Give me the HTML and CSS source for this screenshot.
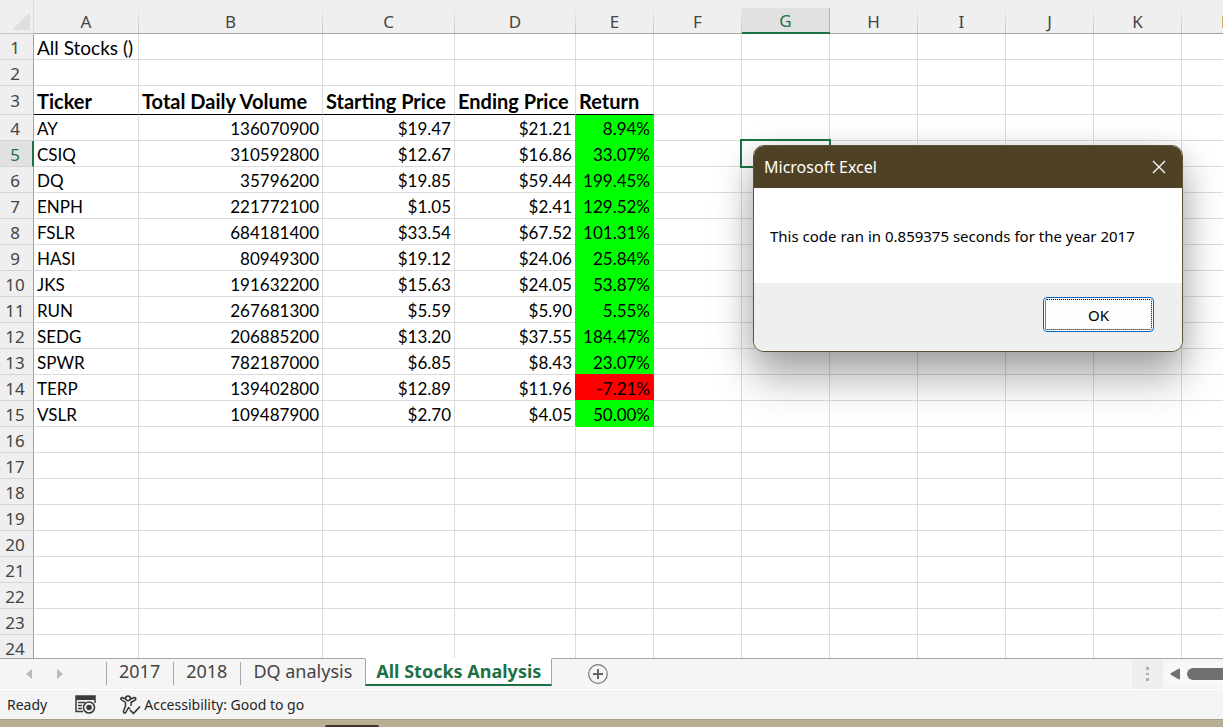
FILE: index.html
```html
<!DOCTYPE html>
<html lang="en">
<head>
<meta charset="utf-8">
<title>All Stocks Analysis</title>
<link rel="stylesheet" href="styles.css">
</head>
<body>
<main class="workspace">
<table class="sheet">
<colgroup><col class="w-rows"><col class="w-a"><col class="w-b"><col class="w-c"><col class="w-d"><col class="w-e"><col class="w-std"><col class="w-std"><col class="w-std"><col class="w-std"><col class="w-std"><col class="w-std"><col></colgroup>
<thead>
<tr><td class="corner"><svg width="18" height="18" viewBox="0 0 18 18" aria-hidden="true"><path d="M18 0V18H0z" fill="#dfdfdf"/></svg></td><th>A</th><th>B</th><th>C</th><th>D</th><th>E</th><th>F</th><th class="active">G</th><th>H</th><th>I</th><th>J</th><th>K</th><th>L</th></tr>
</thead>
<tbody>
<tr><th>1</th><td class="text caption">All Stocks ()</td><td></td><td></td><td></td><td></td><td></td><td></td><td></td><td></td><td></td><td></td><td></td></tr>
<tr><th>2</th><td></td><td></td><td></td><td></td><td></td><td></td><td></td><td></td><td></td><td></td><td></td><td></td></tr>
<tr class="titles"><th>3</th><td class="head">Ticker</td><td class="head">Total Daily Volume</td><td class="head">Starting Price</td><td class="head">Ending Price</td><td class="head">Return</td><td></td><td></td><td></td><td></td><td></td><td></td><td></td></tr>
<tr><th>4</th><td class="text">AY</td><td>136070900</td><td>$19.47</td><td>$21.21</td><td class="gain first">8.94%</td><td></td><td></td><td></td><td></td><td></td><td></td><td></td></tr>
<tr><th class="active">5</th><td class="text">CSIQ</td><td>310592800</td><td>$12.67</td><td>$16.86</td><td class="gain">33.07%</td><td></td><td class="selected"></td><td></td><td></td><td></td><td></td><td></td></tr>
<tr><th>6</th><td class="text">DQ</td><td>35796200</td><td>$19.85</td><td>$59.44</td><td class="gain">199.45%</td><td></td><td></td><td></td><td></td><td></td><td></td><td></td></tr>
<tr><th>7</th><td class="text">ENPH</td><td>221772100</td><td>$1.05</td><td>$2.41</td><td class="gain">129.52%</td><td></td><td></td><td></td><td></td><td></td><td></td><td></td></tr>
<tr><th>8</th><td class="text">FSLR</td><td>684181400</td><td>$33.54</td><td>$67.52</td><td class="gain">101.31%</td><td></td><td></td><td></td><td></td><td></td><td></td><td></td></tr>
<tr><th>9</th><td class="text">HASI</td><td>80949300</td><td>$19.12</td><td>$24.06</td><td class="gain">25.84%</td><td></td><td></td><td></td><td></td><td></td><td></td><td></td></tr>
<tr><th>10</th><td class="text">JKS</td><td>191632200</td><td>$15.63</td><td>$24.05</td><td class="gain">53.87%</td><td></td><td></td><td></td><td></td><td></td><td></td><td></td></tr>
<tr><th>11</th><td class="text">RUN</td><td>267681300</td><td>$5.59</td><td>$5.90</td><td class="gain">5.55%</td><td></td><td></td><td></td><td></td><td></td><td></td><td></td></tr>
<tr><th>12</th><td class="text">SEDG</td><td>206885200</td><td>$13.20</td><td>$37.55</td><td class="gain">184.47%</td><td></td><td></td><td></td><td></td><td></td><td></td><td></td></tr>
<tr><th>13</th><td class="text">SPWR</td><td>782187000</td><td>$6.85</td><td>$8.43</td><td class="gain">23.07%</td><td></td><td></td><td></td><td></td><td></td><td></td><td></td></tr>
<tr><th>14</th><td class="text">TERP</td><td>139402800</td><td>$12.89</td><td>$11.96</td><td class="loss">-7.21%</td><td></td><td></td><td></td><td></td><td></td><td></td><td></td></tr>
<tr><th>15</th><td class="text">VSLR</td><td>109487900</td><td>$2.70</td><td>$4.05</td><td class="gain">50.00%</td><td></td><td></td><td></td><td></td><td></td><td></td><td></td></tr>
<tr><th>16</th><td></td><td></td><td></td><td></td><td></td><td></td><td></td><td></td><td></td><td></td><td></td><td></td></tr>
<tr><th>17</th><td></td><td></td><td></td><td></td><td></td><td></td><td></td><td></td><td></td><td></td><td></td><td></td></tr>
<tr><th>18</th><td></td><td></td><td></td><td></td><td></td><td></td><td></td><td></td><td></td><td></td><td></td><td></td></tr>
<tr><th>19</th><td></td><td></td><td></td><td></td><td></td><td></td><td></td><td></td><td></td><td></td><td></td><td></td></tr>
<tr><th>20</th><td></td><td></td><td></td><td></td><td></td><td></td><td></td><td></td><td></td><td></td><td></td><td></td></tr>
<tr><th>21</th><td></td><td></td><td></td><td></td><td></td><td></td><td></td><td></td><td></td><td></td><td></td><td></td></tr>
<tr><th>22</th><td></td><td></td><td></td><td></td><td></td><td></td><td></td><td></td><td></td><td></td><td></td><td></td></tr>
<tr><th>23</th><td></td><td></td><td></td><td></td><td></td><td></td><td></td><td></td><td></td><td></td><td></td><td></td></tr>
<tr><th>24</th><td></td><td></td><td></td><td></td><td></td><td></td><td></td><td></td><td></td><td></td><td></td><td></td></tr>
</tbody>
</table>
<section class="dialog" role="dialog" aria-labelledby="dialog-title">
<header class="dialog-bar">
<h1 class="dialog-title" id="dialog-title">Microsoft Excel</h1>
<button class="dialog-close" aria-label="Close"><svg width="14" height="14" viewBox="0 0 14 14" aria-hidden="true"><path d="M1 1l12 12M13 1L1 13" stroke="#fff" stroke-width="1.3" fill="none"/></svg></button>
</header>
<p class="dialog-message">This code ran in 0.859375 seconds for the year 2017</p>
<footer class="dialog-actions"><button class="ok">OK</button></footer>
</section>
</main>
<nav class="tabs" aria-label="Sheets">
<div class="tab-scroll">
<button class="arrow" aria-label="Previous sheets"><svg width="6" height="10" viewBox="0 0 6 10" aria-hidden="true"><path d="M6 0v10L0 5z" fill="#b9b9b9"/></svg></button>
<button class="arrow" aria-label="Next sheets"><svg width="6" height="10" viewBox="0 0 6 10" aria-hidden="true"><path d="M0 0v10l6-5z" fill="#b9b9b9"/></svg></button>
</div>
<button class="tab">2017</button>
<button class="tab">2018</button>
<button class="tab">DQ analysis</button>
<button class="tab current">All Stocks Analysis</button>
<div class="tab-rest">
<button class="add" aria-label="New sheet"><svg width="20" height="20" viewBox="0 0 20 20" fill="none" aria-hidden="true"><circle cx="10" cy="10" r="9.3" stroke="#777" stroke-width="1.2"/><path d="M10 5v10M5 10h10" stroke="#666" stroke-width="2"/></svg></button>
<div class="grip"><svg width="3" height="15" viewBox="0 0 3 15" fill="#b0b0b0" aria-hidden="true"><path d="M0 0h3v3H0zM0 6h3v2H0zM0 11h3v3H0z"/></svg></div>
<div class="scroller">
<button class="arrow" aria-label="Scroll left"><svg width="10" height="12" viewBox="0 0 10 12" aria-hidden="true"><path d="M9 .5q1 0 1 1v9q0 1-1 1L.8 6.8Q0 6 .8 5.200z" fill="#707070"/></svg></button>
<div class="thumb"></div>
</div>
</div>
</nav>
<footer class="status">
<span class="ready">Ready</span>
<svg class="macro" width="21" height="19" viewBox="0 0 21 19" fill="none" stroke="#3b3b3b" aria-hidden="true"><path d="M8 16.500H1V1h19v7" stroke-width="1.500"/><path d="M1 3h19" stroke-width="4"/><path d="M3 7.500h7M3 10.500h4M3 13.500h4" stroke-width="1.300"/><circle cx="14" cy="12.500" r="5.500" stroke-width="1.600"/><circle cx="14" cy="12.500" r="2.800" fill="#3b3b3b" stroke="none"/></svg>
<span class="access"><svg width="21" height="20" viewBox="0 0 21 20" fill="none" stroke="#333" stroke-width="1.500" stroke-linejoin="round" aria-hidden="true"><circle cx="8" cy="3.300" r="2.400"/><path d="M5.600 4.200L2.500 2.500Q.5 2.500 1 4.500L5.500 7.500V11L3.500 16Q3.200 18.500 5.500 18L8.500 12.500 10 14M10.400 4.200L14 2.500Q16.500 2.500 15.500 4.800L11 7.500V11"/><path d="M10 15l3.500 3.500L20 11.500" stroke-width="1.700"/></svg>Accessibility: Good to go</span>
</footer>
<div class="taskbar"><div class="taskbar-item"></div></div>
</body>
</html>
```
FILE: styles.css
```css
* {
  box-sizing: border-box;
}

body {
  margin: 0;
  height: 100vh;
  display: flex;
  flex-direction: column;
  overflow: hidden;
  background: #fff;
  color: #000;
  font-family: "Noto Sans", "Open Sans", sans-serif;
}

button {
  margin: 0;
  padding: 0;
  border: 0;
  background: none;
  color: inherit;
  font: inherit;
}

svg {
  display: block;
  flex: none;
}

.workspace {
  position: relative;
  flex: 1;
  min-height: 0;
  overflow: hidden;
}

/* Grid */

.sheet {
  width: 100%;
  min-width: 1270px;
  table-layout: fixed;
  border-collapse: separate;
  border-spacing: 0;
  font-family: Lato, "Open Sans", sans-serif;
  font-size: 17px;
  line-height: 20px;
}

.w-rows { width: 34px; }
.w-a { width: 105px; }
.w-b { width: 184px; }
.w-c { width: 132px; }
.w-d { width: 121px; }
.w-e { width: 78px; }
.w-std { width: 88px; }

.sheet td {
  height: 26px;
  padding: 2px 3px 0;
  border-right: 1px solid #dcdcdc;
  border-bottom: 1px solid #dcdcdc;
  text-align: right;
  white-space: nowrap;
}

.sheet .text {
  text-align: left;
}

.sheet .caption {
  font-size: 19px;
}

.sheet th {
  padding: 0;
  background: #efefef;
  color: #444;
  font-family: "Noto Sans", "Open Sans", sans-serif;
  font-weight: 400;
}

.sheet thead th {
  height: 34px;
  padding: 10px 1px 0 0;
  border-bottom: 1px solid #a6a6a6;
  background: linear-gradient(#efefef 8px, #c4c4c4) right / 1px 100% no-repeat #efefef;
}

.sheet thead .active {
  border-bottom: 2px solid #1e7145;
  background:
    linear-gradient(#efefef 8px, #b0b0b0 8px) right / 1px 100% no-repeat,
    linear-gradient(#efefef 8px, #e1e1e1 8px);
  color: #1e7145;
}

.sheet .corner {
  padding: 12px 3px 3px 12px;
  border-right: 1px solid #dcdcdc;
  border-bottom: 1px solid #c8c8c8;
  background: #efefef;
}

.sheet tbody th {
  border-right: 1px solid #a0a0a0;
  border-bottom: 1px solid #d4d4d4;
  padding: 2px 3px 0 0;
}

.sheet tbody .active {
  padding-right: 2px;
  border-right: 2px solid #1e7145;
  background: #e1e1e1;
  color: #1e7145;
}

.titles td {
  height: 29px;
}

.sheet .head {
  border-bottom-color: #000;
  font-weight: 700;
  font-size: 20px;
  text-align: left;
}

.sheet .gain {
  border-color: #0f0;
  background: #0f0;
  box-shadow: -1px -1px #0f0;
}

.sheet .loss {
  border-color: #f00;
  background: #f00;
  box-shadow: -1px -1px #f00;
}

.sheet .first {
  box-shadow: -1px 0 #0f0;
}

.selected {
  position: relative;
}

.selected::after {
  content: "";
  position: absolute;
  inset: -2px;
  border: 2px solid #1e7145;
}

/* Message box */

.dialog {
  position: absolute;
  top: 145px;
  left: 753px;
  width: 430px;
  overflow: hidden;
  border: 1px solid #5d5136;
  border-radius: 11px;
  background: #fff;
  box-shadow: 0 26px 42px rgba(0, 0, 0, 0.32), 0 2px 28px rgba(0, 0, 0, 0.12);
}

.dialog-bar {
  display: flex;
  align-items: center;
  justify-content: space-between;
  height: 42px;
  padding: 0 16px 0 10px;
  background: #4f4126;
  color: #fff;
}

.dialog-title {
  margin: 0;
  font-size: 16px;
  font-weight: 400;
}

.dialog-message {
  margin: 0;
  padding: 38px 16px 37px;
  font-size: 15px;
  line-height: 20px;
  white-space: nowrap;
}

.dialog-actions {
  display: flex;
  justify-content: flex-end;
  padding: 14px 28px 19px;
  background: #efefef;
}

.ok {
  width: 111px;
  height: 35px;
  border: 1px solid #0067c0;
  border-radius: 4px;
  background: #fdfdfd;
  outline: 1px dotted #000;
  outline-offset: -3px;
  font-size: 15px;
}

/* Sheet tabs */

.tabs {
  display: flex;
  height: 32px;
  border-bottom: 1px solid #fff;
  background: #f5f5f5;
  color: #444;
  font-size: 18px;
}

.tab-scroll {
  display: flex;
  gap: 25px;
  width: 106px;
  padding-left: 26px;
  border-top: 1px solid #a6a6a6;
}

.arrow {
  display: flex;
  align-items: center;
}

.tab {
  position: relative;
  height: 28px;
  padding: 0 13px 4px;
  border-top: 1px solid #a6a6a6;
  line-height: 22px;
  white-space: nowrap;
}

.tab::before {
  content: "";
  position: absolute;
  top: 3px;
  bottom: 1px;
  left: 0;
  border-left: 1px solid #a6a6a6;
}

.current {
  padding: 0 10px 2px;
  border: 1px solid #a6a6a6;
  border-top-color: #fff;
  border-bottom: 2px solid #1e7145;
  background: #fff;
  color: #1e7145;
  font-weight: 700;
}

.current::before {
  display: none;
}

.tab-rest {
  display: flex;
  flex: 1;
  align-items: center;
  border-top: 1px solid #a6a6a6;
}

.add {
  margin-left: 36px;
}

.grip {
  display: flex;
  align-items: center;
  justify-content: center;
  width: 31px;
  height: 30px;
  margin-left: auto;
  background: #eee;
}

.scroller {
  display: flex;
  align-items: center;
  gap: 7px;
  width: 60px;
  height: 24px;
  padding-left: 7px;
  border-radius: 12px 0 0 12px;
  background: #f8f8f8;
}

.thumb {
  flex: 1;
  height: 12px;
  border-radius: 6px 0 0 6px;
  background: #707070;
}

/* Status bar */

.status {
  display: flex;
  align-items: center;
  height: 29px;
  padding-left: 7px;
  background: #f4f4f4;
  color: #262626;
  font-size: 14px;
}

.macro {
  margin-left: 28px;
}

.access {
  display: flex;
  align-items: center;
  gap: 3px;
  margin-left: 24px;
}

.taskbar {
  height: 8px;
  padding: 5px 0 0 325px;
  border-top: 1px solid #a99f80;
  background: #b9af94;
}

.taskbar-item {
  width: 54px;
  height: 2px;
  border-radius: 4px 4px 0 0;
  background: #4a302b;
}
```
